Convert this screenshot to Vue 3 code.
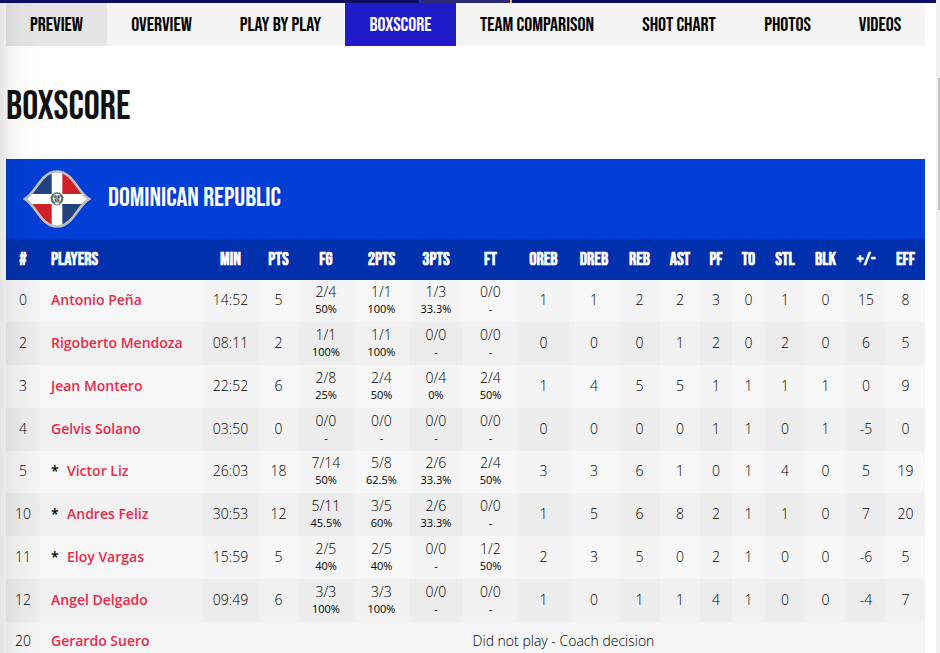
<script setup>
const tabs = [
  { label: 'Preview', weight: 101, state: 'hovered' },
  { label: 'Overview', weight: 109 },
  { label: 'Play by Play', weight: 129 },
  { label: 'Boxscore', weight: 111, state: 'active' },
  { label: 'Team Comparison', weight: 162 },
  { label: 'Shot Chart', weight: 122 },
  { label: 'Photos', weight: 95 },
  { label: 'Videos', weight: 90 },
]

const columns = [
  ['#', 34], ['Players', 162], ['Min', 57], ['Pts', 39], ['FG', 56], ['2Pts', 55],
  ['3Pts', 54], ['FT', 55], ['OReb', 51], ['DReb', 50], ['Reb', 41], ['Ast', 40],
  ['PF', 32], ['TO', 33], ['Stl', 40], ['Blk', 41], ['+/-', 40], ['Eff', 39],
]
const total = columns.reduce((sum, c) => sum + c[1], 0)
const share = (w) => ({ width: (w / total) * 100 + '%' })

const players = [
  { no: 0, name: 'Antonio Peña', min: '14:52', pts: 5, shots: [['2/4', '50%'], ['1/1', '100%'], ['1/3', '33.3%'], ['0/0', '-']], rest: [1, 1, 2, 2, 3, 0, 1, 0, 15, 8] },
  { no: 2, name: 'Rigoberto Mendoza', min: '08:11', pts: 2, shots: [['1/1', '100%'], ['1/1', '100%'], ['0/0', '-'], ['0/0', '-']], rest: [0, 0, 0, 1, 2, 0, 2, 0, 6, 5] },
  { no: 3, name: 'Jean Montero', min: '22:52', pts: 6, shots: [['2/8', '25%'], ['2/4', '50%'], ['0/4', '0%'], ['2/4', '50%']], rest: [1, 4, 5, 5, 1, 1, 1, 1, 0, 9] },
  { no: 4, name: 'Gelvis Solano', min: '03:50', pts: 0, shots: [['0/0', '-'], ['0/0', '-'], ['0/0', '-'], ['0/0', '-']], rest: [0, 0, 0, 0, 1, 1, 0, 1, -5, 0] },
  { no: 5, name: 'Victor Liz', starter: true, min: '26:03', pts: 18, shots: [['7/14', '50%'], ['5/8', '62.5%'], ['2/6', '33.3%'], ['2/4', '50%']], rest: [3, 3, 6, 1, 0, 1, 4, 0, 5, 19] },
  { no: 10, name: 'Andres Feliz', starter: true, min: '30:53', pts: 12, shots: [['5/11', '45.5%'], ['3/5', '60%'], ['2/6', '33.3%'], ['0/0', '-']], rest: [1, 5, 6, 8, 2, 1, 1, 0, 7, 20] },
  { no: 11, name: 'Eloy Vargas', starter: true, min: '15:59', pts: 5, shots: [['2/5', '40%'], ['2/5', '40%'], ['0/0', '-'], ['1/2', '50%']], rest: [2, 3, 5, 0, 2, 1, 0, 0, -6, 5] },
  { no: 12, name: 'Angel Delgado', min: '09:49', pts: 6, shots: [['3/3', '100%'], ['3/3', '100%'], ['0/0', '-'], ['0/0', '-']], rest: [1, 0, 1, 1, 4, 1, 0, 0, -4, 7] },
  { no: 20, name: 'Gerardo Suero', note: 'Did not play - Coach decision' },
]
</script>

<template>
  <div class="page">
    <div class="view">
      <div class="topbar">
        <span class="bar-left"></span>
        <span class="bar-active"></span>
        <span class="bar-right"></span>
      </div>
      <main class="content">
        <nav class="tabs">
          <a
            v-for="tab in tabs"
            :key="tab.label"
            href="#"
            class="tab"
            :class="tab.state"
            :style="{ flexGrow: tab.weight }"
          >{{ tab.label }}</a>
        </nav>

        <h1 class="title">Boxscore</h1>

        <section>
          <header class="team">
            <svg class="flag" viewBox="0 0 68 60" aria-hidden="true">
              <defs>
                <clipPath id="lens">
                  <path d="M1 30C12 24 17 2 34 2S56 24 67 30C56 36 51 58 34 58S12 36 1 30Z" />
                </clipPath>
              </defs>
              <g clip-path="url(#lens)">
                <rect width="68" height="60" fill="#fff" />
                <rect x="0" y="0" width="28.7" height="25" fill="#20427f" />
                <rect x="39.3" y="0" width="29" height="25" fill="#cf2027" />
                <rect x="0" y="35" width="28.7" height="25" fill="#cf2027" />
                <rect x="39.3" y="35" width="29" height="25" fill="#20427f" />
              </g>
              <path d="M2 30C13 24 18 2.500 34 2.500S55 24 66 30C55 36 50 57.500 34 57.500S13 36 2 30Z" fill="none" stroke="#bfc0c2" stroke-width="2.600" />
              <path d="M31 25.500C27.500 28 28 32.500 32 34.500M37 25.500C40.500 28 40 32.500 36 34.500" fill="none" stroke="#4c7a5c" stroke-width="2.200" />
              <path d="M30.500 24.800Q34 23 37.500 24.800" fill="none" stroke="#5d7590" stroke-width="1.500" />
              <path d="M31.500 26.500h5v4q0 2.500-2.500 3.500q-2.500-1-2.500-3.500z" fill="#8b98a8" />
              <path d="M31.500 26.500h2v2.500h-2zM35 30.500h1.500q0 2-1.500 3z" fill="#b3343c" />
              <path d="M35 26.500h1.500v2.500h-1.500zM31.500 30.500h1.800v2.500q-1.500-1-1.800-2.500z" fill="#2f4f86" />
              <path d="M31 35.300Q34 36.500 37 35.300" fill="none" stroke="#b3707a" stroke-width="1.200" />
            </svg>
            <h2 class="team-name">Dominican Republic</h2>
          </header>

          <table class="stats">
            <colgroup>
              <col v-for="c in columns" :key="c[0]" :style="share(c[1])" />
            </colgroup>
            <thead>
              <tr>
                <th v-for="(c, i) in columns" :key="c[0]" scope="col" :class="{ name: i === 1 }">{{ c[0] }}</th>
              </tr>
            </thead>
            <tbody>
              <tr v-for="p in players" :key="p.no" :class="{ absent: p.note }">
                <td>{{ p.no }}</td>
                <td class="name">
                  <span v-if="p.starter" class="starter">*</span>
                  <a href="#">{{ p.name }}</a>
                </td>
                <td v-if="p.note" colspan="16">{{ p.note }}</td>
                <template v-else>
                  <td>{{ p.min }}</td>
                  <td>{{ p.pts }}</td>
                  <td v-for="(s, i) in p.shots" :key="'s' + i">
                    <span class="made">{{ s[0] }}</span>
                    <span class="pct">{{ s[1] }}</span>
                  </td>
                  <td v-for="(v, i) in p.rest" :key="'r' + i">{{ v }}</td>
                </template>
              </tr>
            </tbody>
          </table>
        </section>
      </main>
      <div class="edge-shade"></div>
    </div>
    <div class="track"><div class="thumb"></div></div>
  </div>
</template>

<style>
body {
  margin: 0;
  background: #fff;
}
</style>

<style scoped>
.page {
  display: flex;
  height: 100vh;
  overflow: hidden;
  font-family: "Open Sans", "Noto Sans", sans-serif;
  font-size: 14px;
  font-weight: 300;
  color: #000;
}
.view {
  position: relative;
  flex: 1;
  min-width: 0;
  overflow: hidden;
}
.topbar {
  display: flex;
  height: 3px;
  background: #0d0d63;
}
.bar-left {
  flex: 419;
}
.bar-active {
  flex: 89;
  background: #2d2873;
  border-left: 2px solid #0a45d6;
  border-right: 2px solid #fdb52f;
}
.bar-right {
  flex: 424;
}
.content {
  padding: 0 11px 0 6px;
}
.tabs,
.title,
.team-name,
.stats th {
  font-family: "Bebas Neue", "Liberation Sans Narrow", "Liberation Sans", sans-serif;
  text-transform: uppercase;
  font-weight: 400;
}
.tabs {
  display: flex;
  background: #f4f4f4;
}
.tab {
  flex: 1 1 0;
  padding-top: 1px;
  line-height: 42px;
  font-size: 20px;
  text-align: center;
  white-space: nowrap;
  text-decoration: none;
  color: #000;
}
.tab.hovered {
  background: #e5e5e5;
}
.tab.active {
  background: #1f1bc8;
  color: #fff;
}
.title {
  margin: 0;
  padding: 39px 0 30px;
  font-size: 40px;
  line-height: 44px;
  color: #111;
}
.team {
  display: flex;
  align-items: center;
  gap: 17px;
  height: 80px;
  padding-left: 17px;
  background: #003ed6;
}
.flag {
  width: 68px;
  height: 60px;
}
.team-name {
  margin: 0;
  padding-bottom: 2px;
  font-size: 27px;
  color: #fff;
}
.stats {
  width: 100%;
  table-layout: fixed;
  border-collapse: collapse;
}
.stats th {
  height: 41px;
  padding: 0;
  background: #0030ab;
  color: #fff;
  font-size: 18px;
  font-weight: 700;
  text-align: center;
}
.stats td {
  box-sizing: border-box;
  height: 43px;
  padding: 0 0 2px;
  background: #f7f7f7;
  text-align: center;
  line-height: 18px;
  white-space: nowrap;
}
.stats tr:nth-child(4n + 1) td {
  height: 42px;
}
.stats td:nth-child(odd) {
  background: #f4f4f4;
}
.stats tr:nth-child(even) td {
  background: #f1f1f1;
}
.stats tr:nth-child(even) td:nth-child(odd) {
  background: #ececec;
}
.stats tr.absent td {
  height: 40px;
  background: #f5f5f5;
}
.stats .name {
  padding-left: 11px;
  text-align: left;
}
.name a {
  color: #e92b4c;
  font-weight: 600;
  text-decoration: none;
}
.starter {
  display: inline-block;
  width: 16px;
  font-weight: 600;
}
.made,
.pct {
  display: block;
}
.pct {
  font-size: 11px;
  font-weight: 400;
  line-height: 16px;
}
.edge-shade {
  position: absolute;
  top: 3px;
  bottom: 0;
  left: 0;
  width: 44px;
  pointer-events: none;
  background: linear-gradient(to right, rgba(0, 0, 0, 0.11), rgba(0, 0, 0, 0.05) 20%, rgba(0, 0, 0, 0.02) 50%, transparent);
}
.track {
  width: 4px;
  padding-top: 78px;
  box-sizing: border-box;
  background: #f1f1f1;
}
.thumb {
  height: 132px;
  margin-left: 2px;
  background: #c1c1c1;
}
</style>
